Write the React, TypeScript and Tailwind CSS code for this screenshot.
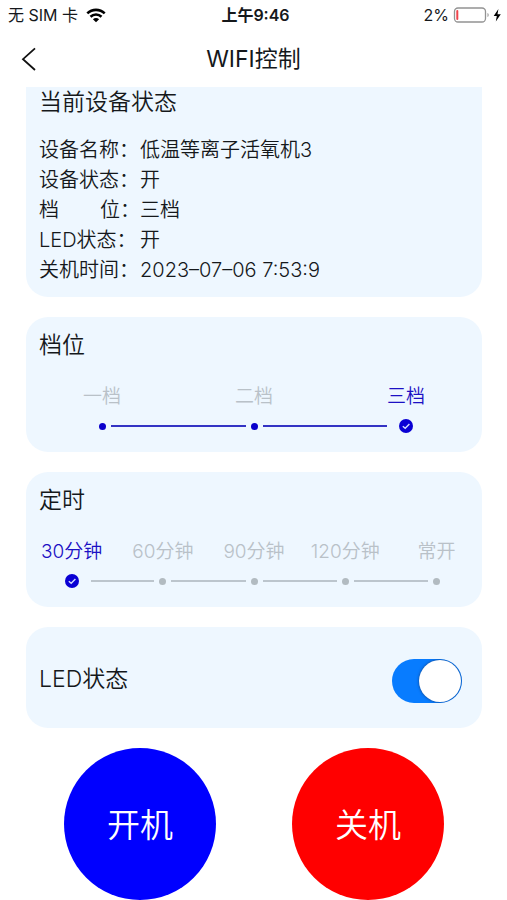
import { useState } from "react";
import type { ReactNode } from "react";

const deviceInfo = [
  { label: "设备名称：", value: "低温等离子活氧机3" },
  { label: "设备状态：", value: "开" },
  { label: "档位：", value: "三档" },
  { label: "LED状态：", value: "开" },
  { label: "关机时间：", value: "2023–07–06 7:53:9" },
];

function Card({ children }: { children: ReactNode }) {
  return <section className="rounded-[22px] bg-[#eef7ff] pt-[13px] pb-[19px]">{children}</section>;
}

function CardTitle({ children }: { children: ReactNode }) {
  return <h2 className="px-[13px] text-[23px] leading-[30px]">{children}</h2>;
}

type StepsProps = {
  name: string;
  options: string[];
  value: number;
  filled: boolean;
  onChange: (index: number) => void;
};

function Steps({ name, options, value, filled, onChange }: StepsProps) {
  const line = filled ? "bg-[#3333c4]" : "bg-[#bcc5cd]";
  const dot = filled ? "bg-[#0a00cc]" : "bg-[#b2bbc1]";
  return (
    <div role="radiogroup" aria-label={name} className="mt-[25px] flex">
      {options.map((option, index) => {
        const active = index === value;
        const id = `${name}-${index}`;
        return (
          <div key={option} className="flex min-w-0 flex-1 flex-col">
            <label
              htmlFor={id}
              className={`text-center text-[19px] leading-6 whitespace-nowrap ${active ? "text-[#1c10c4]" : "text-[#b9c1c8]"}`}
            >
              {option}
            </label>
            <div className="mt-[10px] flex h-[14px] items-center">
              <span className={`h-[2px] flex-1 ${index === 0 ? "" : line}`} />
              <span className={`grid place-items-center ${active ? "mx-3" : "mx-[5px]"}`}>
                <input
                  id={id}
                  type="radio"
                  name={name}
                  checked={active}
                  onChange={() => onChange(index)}
                  className={`col-start-1 row-start-1 appearance-none rounded-full ${active ? "size-[14px] bg-[#0a00d4]" : `size-[7px] ${dot}`}`}
                />
                {active && (
                  <svg viewBox="0 0 14 14" className="pointer-events-none col-start-1 row-start-1 size-[14px]" fill="none">
                    <path d="M3.8 7.2 6.2 9.3 10.4 5.1" stroke="#d5dcff" strokeWidth="1.4" />
                  </svg>
                )}
              </span>
              <span className={`h-[2px] flex-1 ${index === options.length - 1 ? "" : line}`} />
            </div>
          </div>
        );
      })}
    </div>
  );
}

function StatusBar() {
  return (
    <div className="grid h-[30px] grid-cols-[1fr_auto_1fr] items-center pr-1 pl-2 text-base">
      <div className="flex items-center gap-2">
        <span>无 SIM 卡</span>
        <svg viewBox="0 0 20 15" className="h-[15px] w-5" fill="none" stroke="#000">
          <path d="M1.3 5.4C6.2.7 13.8.7 18.7 5.4" strokeWidth="2.6" />
          <path d="M4.5 8.8c3.1-3 7.9-3 11 0" strokeWidth="2.6" />
          <path d="M10 14.3 6.9 11.2c1.8-1.6 4.4-1.6 6.2 0Z" fill="#000" stroke="none" />
        </svg>
      </div>
      <span className="font-semibold">上午9:46</span>
      <div className="flex items-center justify-end gap-1">
        <span>2%</span>
        <svg viewBox="0 0 50 18" className="h-[18px] w-[50px]">
          <rect x="1.5" y="2" width="31" height="14" rx="3.5" fill="#fff" stroke="#929292" strokeWidth="1.3" />
          <path d="M34.5 7c1.5.4 1.5 3.6 0 4Z" fill="#929292" />
          <rect x="3.3" y="4" width="2" height="10" rx="1" fill="#f0444c" />
          <path d="M45.4 3 40.7 9.9h3.1L42.8 15.5l5-7.3h-3.3Z" fill="#000" />
        </svg>
      </div>
    </div>
  );
}

export default function App() {
  const [gear, setGear] = useState(2);
  const [timer, setTimer] = useState(0);
  const [led, setLed] = useState(true);

  return (
    <div className="min-h-screen bg-white font-['Inter','Noto_Sans_CJK_SC',sans-serif] text-[#15181b]">
      <StatusBar />
      <header className="grid h-[57px] grid-cols-[1fr_auto_1fr] items-center">
        <button type="button" aria-label="返回" className="ml-[21px] w-4">
          <svg viewBox="0 0 16 24" className="h-6 w-4" fill="none" stroke="#111" strokeWidth="1.8">
            <path d="M14 1.3 2 12.2 14 23" />
          </svg>
        </button>
        <h1 className="text-[23px] leading-7">WIFI控制</h1>
      </header>

      <main className="flex flex-col gap-5 pr-[25px] pl-[26px] font-[350]">
        <section className="rounded-b-[22px] bg-[#eef7ff] pb-3">
          <CardTitle>当前设备状态</CardTitle>
          <dl className="mt-[18px] px-[13px] text-xl leading-[30px]">
            {deviceInfo.map(({ label, value }) => (
              <div key={label} className="flex">
                <dt className="flex min-w-[101px] justify-between">
                  {label === "档位：" ? (
                    <>
                      <span>档</span>
                      <span>位：</span>
                    </>
                  ) : (
                    label
                  )}
                </dt>
                <dd>{value}</dd>
              </div>
            ))}
          </dl>
        </section>

        <Card>
          <CardTitle>档位</CardTitle>
          <Steps name="档位" options={["一档", "二档", "三档"]} value={gear} filled onChange={setGear} />
        </Card>

        <Card>
          <CardTitle>定时</CardTitle>
          <Steps
            name="定时"
            options={["30分钟", "60分钟", "90分钟", "120分钟", "常开"]}
            value={timer}
            filled={false}
            onChange={setTimer}
          />
        </Card>

        <section className="flex items-start justify-between rounded-[22px] bg-[#eef7ff] px-[13px] pt-8 pb-[25px]">
          <label htmlFor="led" className="text-[23px] leading-10">
            LED状态
          </label>
          <input
            id="led"
            type="checkbox"
            role="switch"
            checked={led}
            onChange={(event) => setLed(event.target.checked)}
            className="mr-[7px] flex h-11 w-[70px] appearance-none items-center overflow-hidden rounded-full bg-gray-300 p-px before:size-[42px] before:rounded-full before:bg-white before:shadow-[0_0_3px_#123c78] before:content-[''] checked:justify-end checked:bg-[#087cff]"
          />
        </section>

        <div className="grid grid-cols-2 justify-items-center text-[33px] text-white">
          <button type="button" className="size-[152px] rounded-full bg-[#0000ff] pt-1">
            开机
          </button>
          <button type="button" className="size-[152px] rounded-full bg-[#ff0000] pt-1">
            关机
          </button>
        </div>
      </main>
    </div>
  );
}
